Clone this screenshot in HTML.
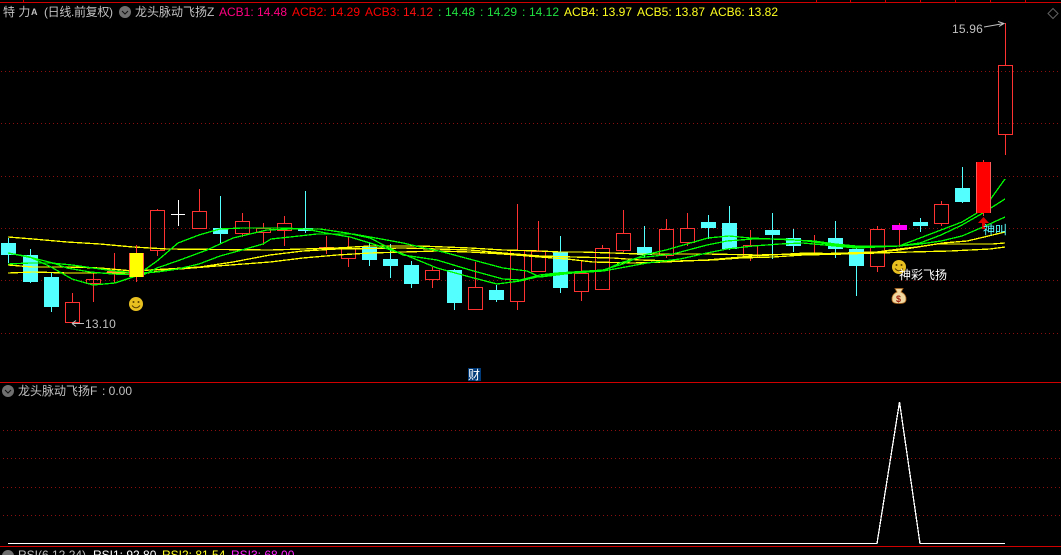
<!DOCTYPE html>
<html><head><meta charset="utf-8"><style>
html,body{margin:0;padding:0;background:#000;width:1061px;height:555px;overflow:hidden}
svg{display:block;position:absolute;left:0;top:0}
text{font-family:"Liberation Sans","WenQuanYi Zen Hei","Noto Sans CJK SC",sans-serif;font-size:12px}
.g{stroke:#00ff00;stroke-width:1.3;fill:none;shape-rendering:crispEdges}
.y{stroke:#ffff00;stroke-width:1.3;fill:none;shape-rendering:crispEdges}
.w{stroke:#ff3232;stroke-width:1;shape-rendering:crispEdges}
.c{fill:#54ffff}.cw{stroke:#54ffff;stroke-width:1;shape-rendering:crispEdges}
.h{fill:none;stroke:#ff3232;stroke-width:1;shape-rendering:crispEdges}
.d{stroke:#8b0f0f;stroke-width:1;stroke-dasharray:1 3;shape-rendering:crispEdges}
</style></head><body>
<svg width="1061" height="555" viewBox="0 0 1061 555">
<rect width="1061" height="555" fill="#000"/>
<!-- frame -->
<g stroke="#d00000" stroke-width="1" shape-rendering="crispEdges">
<path d="M0 2.5H1061M23.5 0V2M816.5 0V2M850.5 0V2M885.5 0V2M920.5 0V2M955.5 0V2M990.5 0V2M1025.5 0V2"/>
<path d="M0 382.5H1061M0 546.5H1061"/>
</g>
<!-- grid -->
<g class="d">
<path class="d" d="M1 71.5H1061"/><path class="d" d="M1 123.5H1061"/><path class="d" d="M1 176.5H1061"/><path class="d" d="M1 228.5H1061"/><path class="d" d="M1 280.5H1061"/><path class="d" d="M1 333.5H1061"/>
<path class="d" d="M3 430.5H1061"/><path class="d" d="M3 458.5H1061"/><path class="d" d="M3 487.5H1061"/><path class="d" d="M3 515.5H1061"/>
</g>
<!-- cyan candles -->
<g class="cw">
<path d="M8.5 238V263M30.5 249V283M51.5 272V312M220.5 196V243M305.5 191V233M369.5 242V266M390.5 244V278M411.5 261V288M454.5 269V310M496.5 285V302M560.5 236V293M644.5 226V257M708.5 215V239M729.5 206V250M772.5 213V259M793.5 229V252M835.5 221V258M856.5 247V296M920.5 218V232M962.5 167V203"/>
</g>
<g class="c">
<rect x="1" y="243" width="15" height="12"/><rect x="23" y="255" width="15" height="27"/><rect x="44" y="277" width="15" height="30"/><rect x="213" y="228" width="15" height="6"/><rect x="298" y="228" width="15" height="3"/><rect x="362" y="247" width="15" height="13"/><rect x="383" y="259" width="15" height="7"/><rect x="404" y="265" width="15" height="19"/><rect x="447" y="270" width="15" height="33"/><rect x="489" y="290" width="15" height="10"/><rect x="553" y="252" width="15" height="36"/><rect x="637" y="247" width="15" height="8"/><rect x="701" y="222" width="15" height="6"/><rect x="722" y="223" width="15" height="26"/><rect x="765" y="230" width="15" height="5"/><rect x="786" y="238" width="15" height="8"/><rect x="828" y="238" width="15" height="11"/><rect x="849" y="249" width="15" height="17"/><rect x="913" y="222" width="15" height="4"/><rect x="955" y="188" width="15" height="14"/>
</g>
<!-- red wicks -->
<path class="w" d="M72.5 293V302M93.500 273V302M114.5 253V283M157.5 209V210M157.5 250V256M199.5 189V211M242.5 213V221M242.5 233V237M263.5 223V228M263.5 232V245M284.5 216V223M284.5 230V246M326.5 236V254M348.5 237V248M348.5 258V267M432.5 267V270M432.5 279V288M475.5 262V287M517.5 204V250M517.5 301V310M538.5 221V251M581.5 260V273M581.5 291V301M602.5 245V248M623.5 210V233M623.5 250V252M666.5 219V229M666.5 255V258M687.5 213V228M687.5 242V246M750.5 230V245M750.5 257V261M814.5 235V255M877.5 226V229M877.5 266V272M899.5 223V247M941.5 201V204M941.5 223V226M1005.5 23V65M1005.5 134V155"/>
<!-- hollow red -->
<g class="h">
<rect x="65.5" y="302.5" width="14" height="20"/><rect x="86.5" y="279.5" width="14" height="4"/><rect x="150.5" y="210.5" width="14" height="40"/><rect x="192.5" y="211.5" width="14" height="17"/><rect x="235.5" y="221.5" width="14" height="12"/><rect x="256.5" y="228.5" width="14" height="4"/><rect x="277.5" y="223.5" width="14" height="7"/><rect x="341.5" y="248.5" width="14" height="10"/><rect x="425.5" y="270.5" width="14" height="9"/><rect x="468.5" y="287.5" width="14" height="22"/><rect x="510.5" y="250.5" width="14" height="51"/><rect x="531.5" y="251.5" width="14" height="20"/><rect x="574.5" y="273.5" width="14" height="18"/><rect x="595.5" y="248.5" width="14" height="41"/><rect x="616.5" y="233.5" width="14" height="17"/><rect x="659.5" y="229.5" width="14" height="26"/><rect x="680.5" y="228.5" width="14" height="14"/><rect x="743.5" y="245.5" width="14" height="12"/><rect x="870.5" y="229.5" width="14" height="37"/><rect x="934.5" y="204.5" width="14" height="19"/><rect x="998.5" y="65.5" width="14" height="69"/>
</g>
<rect x="107" y="271" width="15" height="3" fill="#ff5a3c"/>
<rect x="319" y="247" width="15" height="2" fill="#ff5a3c"/>
<rect x="807" y="253" width="15" height="2" fill="#ff5a3c"/>
<!-- white cross -->
<path d="M178.5 200V226M171 214.5H185" stroke="#fff" stroke-width="1" shape-rendering="crispEdges"/>
<!-- MA lines -->
<polyline class="y" points="8,237 33,239 67,242 100,244 133,247 167,249 270,250 337,248 370,246 420,246 470,248 503,250 540,251 560,252 580,252 613,253 640,254 707,254 757,255 810,254 845,253 877,252 899,249 917,247 943,243 967,241 980,238 1005,232"/>
<polyline class="y" points="8,265 33,267 67,267 100,268 133,271 167,269 200,267 233,262 270,255 303,251 337,249 403,248 470,250 503,253 540,256 573,257 613,258 640,260 677,261 713,260 740,258 773,257 803,255 845,254 877,252 899,250 937,244 992,244 1005,243"/>
<polyline class="y" points="8,273 33,272 67,273 100,273 147,273 167,270 217,266 270,262 303,258 337,255 370,253 437,251 470,252 503,254 540,257 567,259 593,262 633,263 663,262 707,260 753,256 807,253 845,254 877,253 910,252 950,251 990,249 1005,247"/>
<polyline class="g" points="8,253 30,257 51,267 72,279 93,285 115,283 136,276 157,261 178,243 199,235 220,229 242,228 263,228 284,228 305,229 326,233 350,237 370,243 403,254 437,268 470,277 497,284 520,281 537,277 557,274 573,272 603,270 623,264 644,255 666,250 687,244 708,238 729,236 750,238 772,239 793,240 814,241 835,244 856,246 877,246 899,246 920,238 941,230 962,222 977,213 990,200 1005,179"/>
<polyline class="g" points="8,253 33,258 53,263 67,268 90,272 113,274 143,275 157,268 180,260 207,250 233,238 267,230 290,229 320,229 347,233 370,238 403,255 437,260 470,270 503,279 520,280 540,275 557,273 573,272 603,271 620,263 637,258 673,254 707,245 727,241 753,239 783,239 807,241 835,245 856,247 877,247 899,246 920,243 941,235 962,225 983,213 1005,199"/>
<polyline class="g" points="8,264 30,263 51,263 72,265 93,268 115,271 136,273 157,272 178,269 199,264 220,256 242,250 263,244 271,239 290,237 317,234 353,234 370,237 403,243 420,247 443,252 473,260 503,268 527,271 540,277 557,275 573,273 603,271 620,268 647,263 680,259 707,253 727,249 753,246 780,244 803,243 835,246 856,248 877,247 899,246 920,244 941,241 962,236 983,227 1005,217"/>
<!-- top-most candles -->
<path class="w" d="M136.5 245V253M136.5 277V282M983.5 160V162M983.5 213V216"/>
<rect x="129" y="253" width="15" height="24" fill="#ffff00"/><path d="M129.5 253V277M143.5 253V277" stroke="#ff5a3c" shape-rendering="crispEdges"/>
<rect x="892" y="225" width="15" height="5" fill="#ff00ff"/>
<rect x="976" y="162" width="15" height="51" fill="#ff0000"/><path d="M976.5 162V213M990.5 162V213" stroke="#ff5a5a" shape-rendering="crispEdges"/>
<!-- red arrow -->
<path d="M983.5 217L989 223H985V229H982V223H978Z" fill="#e00000"/>
<!-- subpanel line -->
<path d="M8 543.5H877L899.5 402L920 543.5H1005" fill="none" stroke="#fff" stroke-width="1.3" shape-rendering="crispEdges"/>
<!-- price labels -->
<path d="M72 323.5H84M72 323.5l4-3M72 323.5l4 3" stroke="#c0c0c0" fill="none"/>
<text x="85" y="328" fill="#c0c0c0" letter-spacing=".2">13.10</text>
<text x="952" y="33" fill="#c0c0c0" letter-spacing=".2">15.96</text>
<path d="M984 27L1004 23.5M998 21.5L1004 23.5L999 26.5" stroke="#c0c0c0" fill="none"/>
<!-- smileys -->
<g><circle cx="136" cy="304" r="7" fill="#e8c020"/><circle cx="133.5" cy="302" r="1" fill="#5a4000"/><circle cx="138.5" cy="302" r="1" fill="#5a4000"/><path d="M132 305.5Q136 310 140 305.5" stroke="#5a4000" fill="none"/></g>
<g><circle cx="899" cy="267" r="7" fill="#e8c020"/><circle cx="896.5" cy="265" r="1" fill="#5a4000"/><circle cx="901.5" cy="265" r="1" fill="#5a4000"/><path d="M895 268.5Q899 273 903 268.5" stroke="#5a4000" fill="none"/></g>
<!-- money bag -->
<path d="M895 288.5h8l-2 3.5c4 1.5 5.5 5 5 8c-.5 3-3 3.500-7 3.500s-6.500-.5-7-3.500c-.5-3 1-6.500 5-8z" fill="#f0d8a0" stroke="#b06820" stroke-width=".8"/>
<text x="896" y="302" fill="#a02010" style="font-size:9px;font-weight:bold">$</text>
<!-- markers text -->
<text x="899" y="279" fill="#fff">神彩飞扬</text>
<svg x="983" y="222" width="23" height="16" overflow="hidden"><text x="0" y="12" fill="#54ffff">神叫</text></svg>
<rect x="468" y="368" width="13" height="13" fill="#003a78"/>
<text x="468" y="379" fill="#fff">财</text>
<!-- header -->
<text x="3" y="16" fill="#c0c0c0">特 力</text>
<text x="31" y="15" fill="#c0c0c0" style="font-size:9px;font-weight:bold">A</text>
<text x="44" y="16" fill="#c0c0c0" textLength="69">(日线.前复权)</text>
<circle cx="125" cy="12" r="6" fill="#707070"/><path d="M122 11l3 3 3-3" stroke="#111" fill="none"/>
<text x="135" y="16" fill="#c0c0c0">龙头脉动飞扬Z</text>
<text x="219" y="16" fill="#ff0080">ACB1:</text><text x="257" y="16" fill="#ff0080">14.48</text>
<text x="292" y="16" fill="#ff0000">ACB2:</text><text x="330" y="16" fill="#ff0000">14.29</text>
<text x="365" y="16" fill="#ff0000">ACB3:</text><text x="403" y="16" fill="#ff1010">14.12</text>
<text x="438" y="16" fill="#20e040">:</text><text x="445" y="16" fill="#20e040">14.48</text>
<text x="480" y="16" fill="#20e040">:</text><text x="487" y="16" fill="#20e040">14.29</text>
<text x="522" y="16" fill="#20e040">:</text><text x="529" y="16" fill="#20e040">14.12</text>
<text x="564" y="16" fill="#ffff20">ACB4:</text><text x="602" y="16" fill="#ffff20">13.97</text>
<text x="637" y="16" fill="#ffff20">ACB5:</text><text x="675" y="16" fill="#ffff20">13.87</text>
<text x="710" y="16" fill="#ffff20">ACB6:</text><text x="748" y="16" fill="#ffff20">13.82</text>
<path d="M1053 8.500l5 5-5 5-5-5z" stroke="#606060" fill="none"/>
<!-- sub header -->
<circle cx="8" cy="391" r="6" fill="#707070"/><path d="M5 390l3 3 3-3" stroke="#111" fill="none"/>
<text x="18" y="395" fill="#c0c0c0">龙头脉动飞扬F</text>
<text x="102" y="395" fill="#c0c0c0">: 0.00</text>
<!-- bottom -->
<circle cx="8" cy="556" r="6" fill="#707070"/>
<text x="18" y="559" fill="#c0c0c0">RSI(6,12,24)</text>
<text x="93" y="559" fill="#fff">RSI1: 92.80</text>
<text x="162" y="559" fill="#ffff20">RSI2: 81.54</text>
<text x="231" y="559" fill="#ff20ff">RSI3: 68.00</text>
</svg>
</body></html>
